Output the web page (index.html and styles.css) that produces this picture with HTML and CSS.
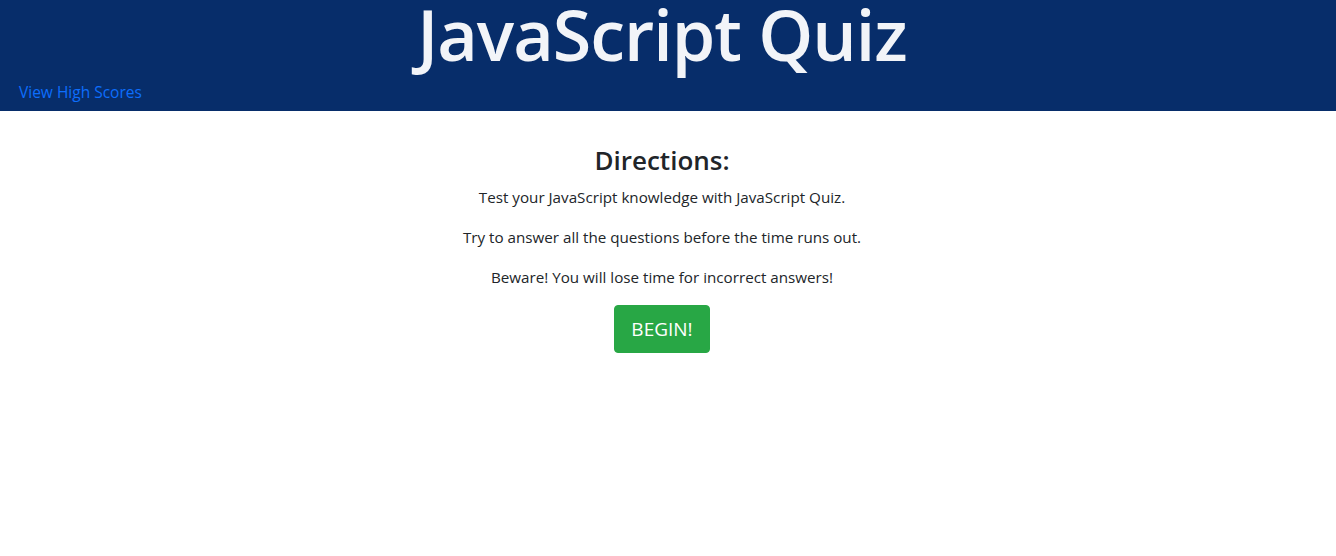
FILE: index.html
```html
<!DOCTYPE html>
<html lang="en">
<head>
<meta charset="utf-8">
<title>JavaScript Quiz</title>
<link rel="stylesheet" href="styles.css">
</head>
<body>
<header class="site-header">
  <h1 class="site-title">JavaScript Quiz</h1>
  <a class="scores-link" href="#">View High Scores</a>
</header>
<main class="intro">
  <h2 class="intro-title">Directions:</h2>
  <p class="intro-text">Test your JavaScript knowledge with JavaScript Quiz.</p>
  <p class="intro-text">Try to answer all the questions before the time runs out.</p>
  <p class="intro-text">Beware! You will lose time for incorrect answers!</p>
  <button class="begin-btn" type="button">BEGIN!</button>
</main>
</body>
</html>
```
FILE: styles.css
```css
* { box-sizing: border-box; }
html, body { margin: 0; padding: 0; }
body {
  font-family: "Open Sans", "Noto Sans", sans-serif;
  font-size: 15px;
  line-height: 1.5;
  color: #212529;
  background: #fff;
}
.site-header {
  background: #072d6a;
  height: 111px;
  display: flex;
  flex-direction: column;
  padding-right: 12px;
}
.site-title {
  margin: 0;
  text-align: center;
  font-size: 70px;
  font-weight: 600;
  line-height: 69px;
  color: #f2f4f8;
  letter-spacing: -1px;
}
.scores-link {
  align-self: flex-start;
  margin-left: 19px;
  margin-top: 11px;
  color: #0d6efd;
  text-decoration: none;
  font-size: 15.5px;
  line-height: 24px;
}
.intro {
  display: flex;
  flex-direction: column;
  align-items: center;
  padding-top: 30px;
  padding-right: 12px;
}
.intro-title {
  margin: 0 0 6px;
  font-size: 26px;
  font-weight: 600;
  line-height: 38px;
}
.intro-text {
  margin: 0 0 16px;
  font-size: 15.2px;
  line-height: 24px;
}
.begin-btn {
  background: #28a745;
  color: #fff;
  border: 1px solid #28a745;
  border-radius: 4px;
  padding: 8px 16px;
  font-family: inherit;
  font-size: 19px;
  line-height: 30px;
  cursor: pointer;
}
```
